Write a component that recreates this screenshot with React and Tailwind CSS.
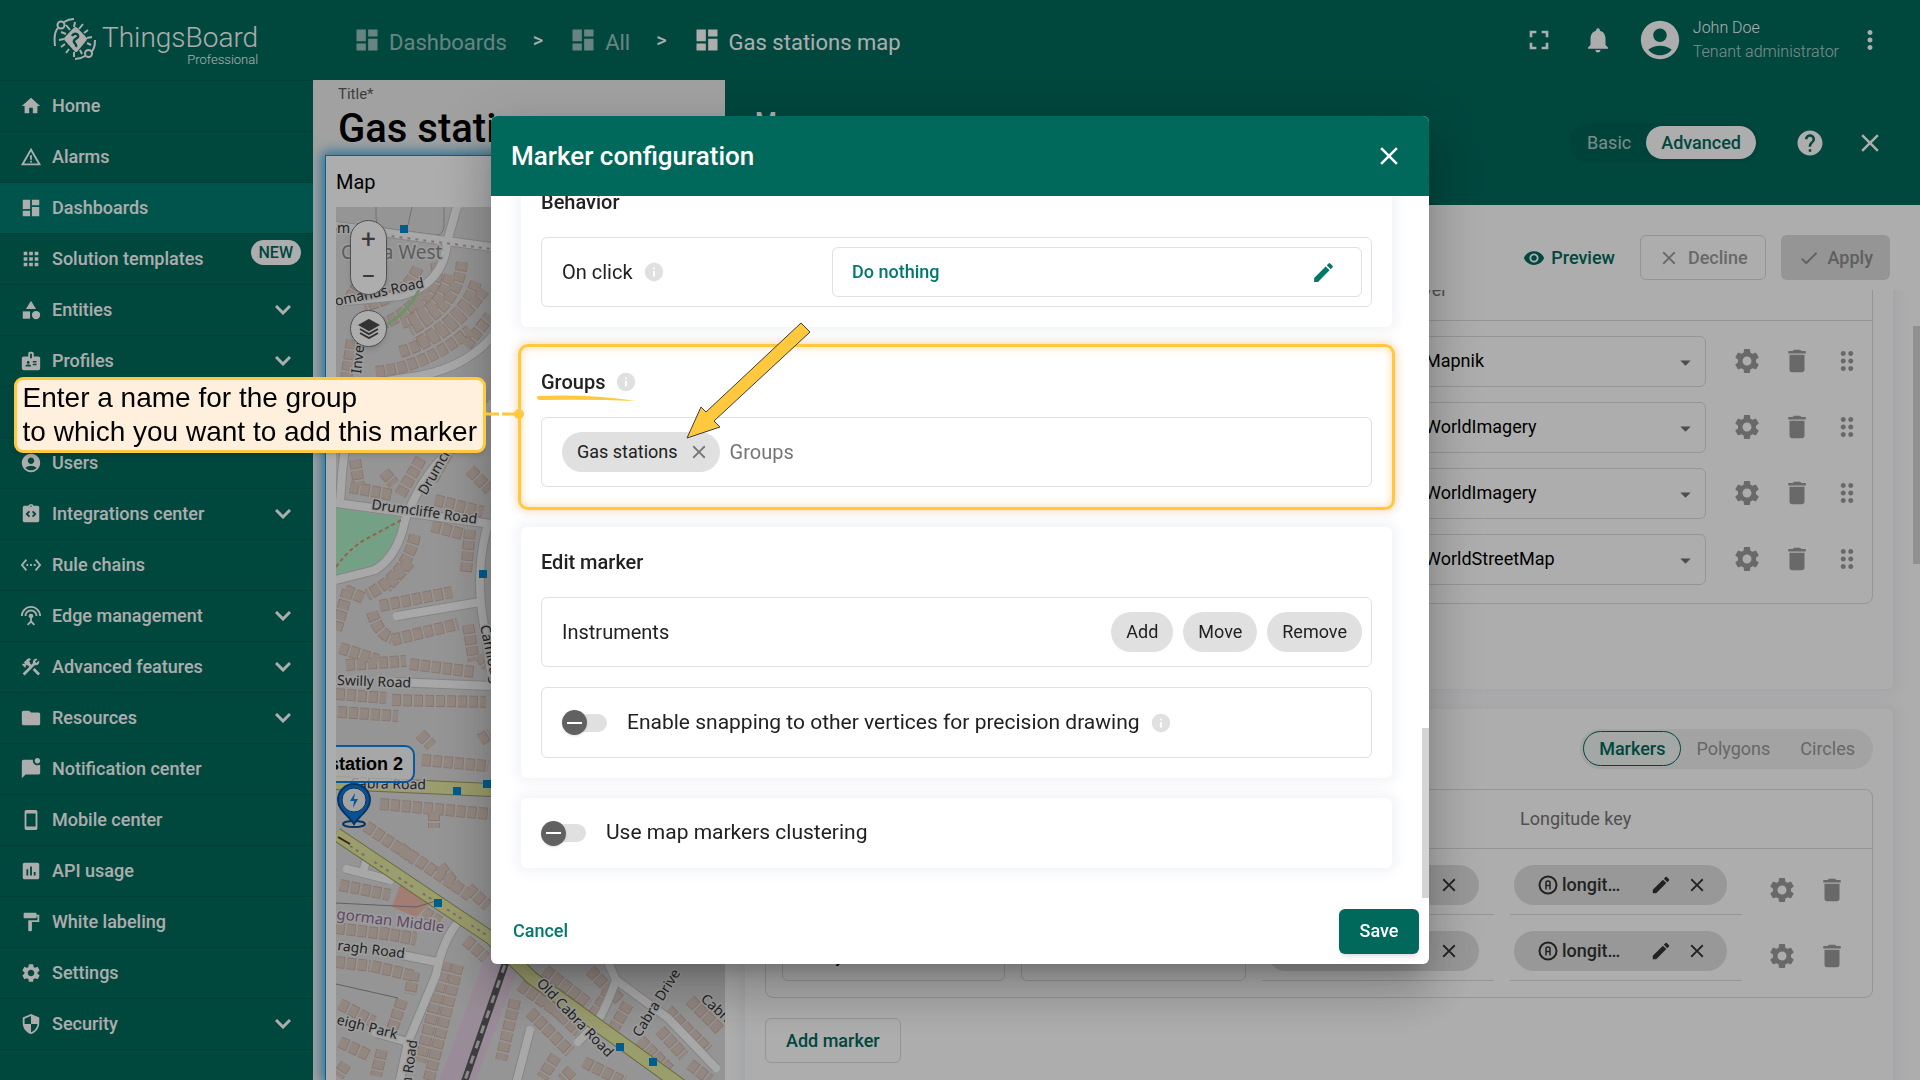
import {
  MdAccountCircle,
  MdApps,
  MdArrowDropDown,
  MdBadge,
  MdCategory,
  MdCheck,
  MdClose,
  MdConstruction,
  MdDashboard,
  MdDelete,
  MdDragIndicator,
  MdEdit,
  MdFolder,
  MdFormatPaint,
  MdFullscreen,
  MdHelp,
  MdHome,
  MdInfo,
  MdInsertChart,
  MdIntegrationInstructions,
  MdMarkChatUnread,
  MdMoreVert,
  MdNotifications,
  MdSecurity,
  MdSettings,
  MdSettingsEthernet,
  MdSettingsInputAntenna,
  MdStayPrimaryPortrait,
  MdSupervisorAccount,
  MdVisibility,
  MdWarningAmber,
} from "react-icons/md";

const menu = [
  { label: "Home", icon: MdHome },
  { label: "Alarms", icon: MdWarningAmber },
  { label: "Dashboards", icon: MdDashboard, active: true },
  { label: "Solution templates", icon: MdApps, badge: "NEW" },
  { label: "Entities", icon: MdCategory, expandable: true },
  { label: "Profiles", icon: MdBadge, expandable: true },
  { label: "Customers", icon: MdSupervisorAccount },
  { label: "Users", icon: MdAccountCircle },
  { label: "Integrations center", icon: MdIntegrationInstructions, expandable: true },
  { label: "Rule chains", icon: MdSettingsEthernet },
  { label: "Edge management", icon: MdSettingsInputAntenna, expandable: true },
  { label: "Advanced features", icon: MdConstruction, expandable: true },
  { label: "Resources", icon: MdFolder, expandable: true },
  { label: "Notification center", icon: MdMarkChatUnread },
  { label: "Mobile center", icon: MdStayPrimaryPortrait },
  { label: "API usage", icon: MdInsertChart },
  { label: "White labeling", icon: MdFormatPaint },
  { label: "Settings", icon: MdSettings },
  { label: "Security", icon: MdSecurity, expandable: true },
];

function Logo() {
  return (
    <div className="flex w-[313px] shrink-0 items-start pl-[53px] pt-4">
      <svg width="46" height="46" viewBox="0 0 46 46" fill="none" stroke="white" strokeWidth="2">
        <path d="M2 30C1 22 2 15 5 12M11 6C14 4 17 3 21 3" />
        <circle cx="8" cy="9" r="3.5" />
        <path d="M42 24c0 6-1 10-4 12M32 40c-3 2-6 3-10 3" />
        <circle cx="35.500" cy="37.500" r="3.500" />
        <path d="M22.500 13l9.500 10-9 11-10-11z" fill="white" strokeLinejoin="round" strokeWidth="4" />
        <path d="M17 14l-4-5M21 11l1-5M26 13l4-5M31 17l4-3M34 22l5-1M34 27l4 2M13 18l-5-2M11 23l-5 1M12 28l-4 3M16 33l-3 4M21 36v5M27 34l2 4" />
        <path d="M19 20c2-4 7-2 6 1-1 2-5 2-4 5 1 2 3 2 2 5" stroke="#00695c" strokeWidth="2.500" />
      </svg>
      <div className="ml-[3px] flex flex-col items-end text-white">
        <span className="text-[28px] leading-[44px] font-light">ThingsBoard</span>
        <span className="-mt-2 text-[13px] leading-4 font-light">Professional</span>
      </div>
    </div>
  );
}

function Header() {
  return (
    <header className="flex h-20 shrink-0 bg-[#00695c] text-white">
      <Logo />
      <nav className="flex flex-1 items-center pl-10 text-[22px]">
        <a href="#dashboards" className="flex items-center gap-2 opacity-60">
          <MdDashboard size={28} />
          <span className="pt-[5px]">Dashboards</span>
        </a>
        <span className="mx-[26px] text-xl font-medium">&gt;</span>
        <a href="#all" className="flex items-center gap-2 opacity-60">
          <MdDashboard size={28} />
          <span className="pt-[5px]">All</span>
        </a>
        <span className="mx-[26px] text-xl font-medium">&gt;</span>
        <a href="#map" className="flex items-center gap-2">
          <MdDashboard size={28} />
          <span className="pt-[5px]">Gas stations map</span>
        </a>
      </nav>
      <div className="flex items-center pr-[35px]">
        <button aria-label="Fullscreen" className="mr-7">
          <MdFullscreen size={32} />
        </button>
        <button aria-label="Notifications" className="mr-6">
          <MdNotifications size={30} />
        </button>
        <MdAccountCircle size={46} />
        <div className="mr-4 ml-[10px] pb-px text-base leading-6 font-light">
          <p>John Doe</p>
          <p className="opacity-70">Tenant administrator</p>
        </div>
        <button aria-label="More">
          <MdMoreVert size={30} />
        </button>
      </div>
    </header>
  );
}

function Sidebar() {
  return (
    <nav className="w-[313px] shrink-0 bg-[#00695c] text-white">
      {menu.map(({ label, icon: Icon, active, badge, expandable }) => (
        <a
          key={label}
          href={"#" + label}
          className={`flex h-[51px] items-center border-t border-[#005c51] pl-5 text-lg font-medium ${active ? "bg-[#007c70]" : ""}`}
        >
          <Icon size={22} />
          <span className="ml-[10px] flex-1">{label}</span>
          {badge && (
            <span className="mr-3 mb-[14px] rounded-full bg-white px-2 text-base leading-[25px] text-[#00695c]">{badge}</span>
          )}
          {expandable && (
            <svg className="mr-[22px]" width="16" height="10" viewBox="0 0 16 10" fill="none" stroke="white" strokeWidth="3">
              <path d="M1 1l7 7 7-7" />
            </svg>
          )}
        </a>
      ))}
      <div className="border-t border-[#005c51]" />
    </nav>
  );
}

const buildings = [
  "M385 262q-22 12-35 36M426 285q-18 36-62 44M418 268q-12 28-54 38",
  "M436 262q6 24-22 46M462 262q-4 44-52 68",
  "M450 275q-10 36-48 48M352 340l-6 40M476 282q-10 34-60 62",
  "M376 372q50-5 94-42M400 352q50-14 84-62M466 346l24-30",
  "M355 460l4 26M350 487l42 8M400 495l22-38M432 480l24-42M384 472l10 12",
  "M435 500l48 12M470 470l20 20M432 526l30 8M470 530l-4 42",
  "M415 535q-8 40-48 60M345 590l18 8M336 630l12-40",
  "M380 606l72-14M372 612q6 22 20 26M392 640l66-16M410 562l-24 26M468 625l6 36",
  "M346 665l60-4M340 648l38 12M410 664l64 8M480 655l8 12",
  "M336 694l50 4M392 700l94 2M338 712l60 4M420 734l12 12M480 740l10-6",
  "M422 760l66 6M380 804l110 10M434 812v16",
  "M366 826l50 34M400 848l70 48M468 888l20 18M440 866l16 20",
  "M340 885l50 10M336 928l80 10M380 932l36 8M424 912l16 10",
  "M336 962l34 4M372 966l42 10M466 940l20 18M414 972l-4 22",
  "M402 1000l-10 30M446 962l-26 100M458 965l-30 118M340 1004l34 18",
  "M340 1042l30 14M382 1050l-6 26M346 1064l-8 12",
  "M530 976l42 30M520 985l42 30M545 970l44 34M590 970l30 30M610 990l-20 30",
  "M515 1000l-14 60M530 1012l40 40M545 1000l34 32M556 1056l-14 22",
  "M668 1010l40 40M660 1030l24 26M690 1000l30 30M640 1040l30 30M584 1062l40 20",
  "M690 1064l20 16M628 1004l-14 24M572 1070l-10 10",
];

const roads = [
  "M336 226L491 247",
  "M457 207L447 242Q444 284 400 296L336 302",
  "M491 338Q460 372 405 378L356 386Q343 440 340 503",
  "M336 503L491 524",
  "M405 520Q420 480 445 455L491 404",
  "M405 520Q398 556 375 570L336 580",
  "M488 524Q476 566 482 612L491 672",
  "M397 616L480 602",
  "M395 682L491 686",
  "M347 869L390 880M367 858l-4 14",
  "M458 922Q442 942 436 975L408 1042",
  "M392 953L437 962",
  "M376 1033L408 1042L400 1080",
  "M607 960L616 980L668 1018L716 1068",
  "M616 980Q606 1008 596 1024L578 1042",
  "M530 1030L516 1084",
];

const stops = [
  [404, 229],
  [483, 574],
  [457, 791],
  [487, 784],
  [438, 903],
  [620, 1047],
  [653, 1062],
];

const mapLabels = [
  ["m Av", 337, 233, 0],
  ["omanus Road", 336, 306, -12],
  ["Inver", 361, 374, -84],
  ["Drumcliffe Road", 371, 509, 8],
  ["Drumcliffe", 426, 496, -60],
  ["Swilly Road", 337, 685, 2],
  ["Camlough", 480, 626, 78],
  ["Cabra Road", 350, 788, 1],
  ["ragh Road", 337, 950, 7],
  ["eigh Park", 336, 1024, 14],
  ["n Road", 411, 1086, -82],
  ["Old Cabra Road", 536, 984, 46],
  ["Cabra Drive", 640, 1038, -58],
  ["Cabra Drive", 700, 1000, 42],
];

function StreetMap() {
  return (
    <svg className="block h-full w-full bg-[#dddcdc]" aria-label="Street map">
      <g transform="translate(-336 -207)" fill="none">
        <path d="M336 508l68 10q-8 36-34 52l-34 8z" fill="#abeec4" />
        <path d="M400 885l-8 22 24 10 16-16z" fill="#efb9aa" />
        <path d="M495 930l-56 152h36l50-130z" fill="#e2cfe0" />
        <g stroke="#cbb0a4" strokeWidth="12" strokeDasharray="9 2">
          {buildings.map((d) => (
            <path key={d} d={d} />
          ))}
        </g>
        <g stroke="#d9c8be" strokeWidth="10" strokeDasharray="8 3">
          {buildings.map((d) => (
            <path key={d} d={d} />
          ))}
        </g>
        <path d="M376 207v10q0 10 8 11l52 7q8 0 8-10v-18M412 207l-4 18" stroke="#a9a9a9" />
        <g stroke="#c4c4c4" strokeWidth="10">
          {roads.map((d) => (
            <path key={d} d={d} />
          ))}
        </g>
        <g stroke="#f8f8f8" strokeWidth="8" strokeLinecap="round">
          {roads.map((d) => (
            <path key={d} d={d} />
          ))}
        </g>
        <path d="M336 229l155 20" stroke="#c3a7ae" strokeWidth="2" strokeDasharray="3 5" />
        <path d="M336 567q16-22 34-30l33-18" stroke="#e08d6d" strokeWidth="2" strokeDasharray="4 3" />
        <path d="M381 328q26-14 38-38" stroke="#a6d79a" strokeWidth="3" />
        <g strokeWidth="14" stroke="#9c9d5b">
          <path d="M336 783l155 7" />
          <path d="M336 834L491 938L532 978L690 1092" />
        </g>
        <g strokeWidth="12" stroke="#e4e7a0">
          <path d="M336 783l155 7" />
          <path d="M336 834L491 938L532 978L690 1092" />
        </g>
        <path d="M350 846L491 938" stroke="#b6a09f" strokeWidth="2" strokeDasharray="3 4 3 4 3 12" />
        <path d="M338 837l12 7" stroke="#513020" strokeWidth="2" />
        <path d="M510 950L463 1086" stroke="#5a5a5a" strokeWidth="7" />
        <path d="M510 950L463 1086" stroke="#cccccc" strokeWidth="3" strokeDasharray="8 8" />
        <path d="M336 903l80 4 20-6M336 984l62 14" stroke="#8e8e8e" />
        <g
          fill="#333333"
          stroke="#e8e8e8"
          strokeWidth="3"
          paintOrder="stroke"
          fontFamily="Noto Sans, sans-serif"
          fontSize="14"
        >
          <text x="341" y="259" fontSize="19" fill="#8a8a8a">
            Cabra West
          </text>
          <text x="336" y="919" fill="#8d6a96" fontSize="15" transform="rotate(7 336 919)">
            gorman Middle
          </text>
          {mapLabels.map(([text, x, y, angle]) => (
            <text key={text + x} x={x} y={y} transform={`rotate(${angle} ${x} ${y})`}>
              {text}
            </text>
          ))}
        </g>
        {stops.map(([x, y]) => (
          <rect key={x} x={x - 4} y={y - 4} width="8" height="8" fill="#0089d0" />
        ))}
        <rect x="290" y="746" width="124" height="36" rx="9" fill="#ffffff" fillOpacity="0.75" stroke="#0c82ee" strokeWidth="2" />
        <text x="403" y="770" textAnchor="end" fill="#000000" fontFamily="Liberation Sans, sans-serif" fontWeight="700" fontSize="18">
          Gas station 2
        </text>
        <ellipse cx="354" cy="824" rx="11" ry="3" stroke="#0a4f91" strokeWidth="2" />
        <path d="M354 824c-5-8-16-14-16-24a16 16 0 0 1 32 0c0 10-11 16-16 24z" fill="#0c78dd" stroke="#0a4f91" strokeWidth="2" />
        <circle cx="354" cy="800" r="12" fill="#f0f0f0" stroke="#0a4f91" />
        <path d="M355 793l-5 8h4l-1 7 5-9h-4z" fill="#0c82ee" />
      </g>
    </svg>
  );
}

function Dashboard() {
  return (
    <section className="flex min-w-0 flex-1 flex-col overflow-hidden bg-[#eeeeee]">
      <div className="h-[75px] pl-[25px] whitespace-nowrap">
        <p className="pt-1 text-[15px] leading-5 text-[#5c5c5c]">Title*</p>
        <h1 className="text-[40px] leading-[50px] font-medium text-black">Gas stations map</h1>
      </div>
      <div className="-mr-3 ml-3 flex flex-1 flex-col border border-b-0 border-[#0092dc] bg-white px-[10px] shadow-[0_0_12px_3px_#3aa3d8]">
        <h2 className="h-[51px] text-xl leading-[52px] text-black">Map</h2>
        <div className="relative min-h-0 flex-1">
          <div className="absolute inset-0">
            <StreetMap />
          </div>
          <div className="absolute top-[13px] left-[14px] flex w-[37px] flex-col items-center gap-[15px]">
            <div className="flex h-[75px] w-full flex-col items-center justify-between rounded-full border border-[#777777] bg-white text-[26px] leading-9 text-[#555555] shadow-md">
              <button aria-label="Zoom in">+</button>
              <button aria-label="Zoom out">−</button>
            </div>
            <button aria-label="Layers" className="flex h-[37px] w-full items-center justify-center rounded-full border border-[#777777] bg-white shadow-md">
              <svg width="22" height="20" viewBox="0 0 22 20" fill="none" stroke="#4b4b4b" strokeWidth="2">
                <path d="M11 1l9 5-9 5-9-5z" fill="#4b4b4b" />
                <path d="M2 10l9 5 9-5M2 14l9 5 9-5" />
              </svg>
            </button>
          </div>
        </div>
      </div>
    </section>
  );
}

function IconButton({ label, icon: Icon, size = 30 }) {
  return (
    <button aria-label={label} className="flex w-[50px] shrink-0 items-center justify-center text-[#9b9b9b]">
      <Icon size={size} />
    </button>
  );
}

function LayerRow({ value }) {
  return (
    <tr className="h-[66px]">
      <td />
      <td />
      <td className="px-2 pt-[15px] align-top">
        <div className="relative">
          <select
            aria-label="Layer"
            className="block h-[51px] w-full appearance-none rounded-md border border-[#dcdcdc] bg-transparent pl-8 text-lg text-black"
          >
            <option>{value}</option>
          </select>
          <MdArrowDropDown className="pointer-events-none absolute top-[14px] right-2 text-[#707070]" size={25} />
        </div>
      </td>
      <td className="pt-[15px] pl-2">
        <div className="flex">
          <IconButton label="Layer settings" icon={MdSettings} />
          <IconButton label="Delete layer" icon={MdDelete} />
          <IconButton label="Drag layer" icon={MdDragIndicator} />
        </div>
      </td>
    </tr>
  );
}

function KeyChip({ name }) {
  return (
    <div className="h-[50px] border-b border-[#dcdcdc]">
      <div className="mr-[15px] ml-1 flex h-10 items-center rounded-full bg-[#e0e0e0] pr-[19px] pl-6 text-lg font-medium text-[#333333]">
        <svg width="20" height="20" viewBox="0 0 20 20" fill="none" stroke="currentColor" strokeWidth="2">
          <circle cx="10" cy="10" r="8.500" />
          <path d="M8 14.500V7.500q0-1.500 2-1.500t2 1.500v7M8 10.500h4" strokeWidth="1.500" />
        </svg>
        <span className="ml-1 flex-1">{name}</span>
        <button aria-label="Edit key" className="mr-[14px]">
          <MdEdit size={22} />
        </button>
        <button aria-label="Remove key">
          <MdClose size={22} />
        </button>
      </div>
    </div>
  );
}

function MarkerRow() {
  return (
    <tr className="h-[66px]">
      <td className="pt-4 pr-2 pl-4">
        <select aria-label="Source" className="block h-[50px] w-full appearance-none rounded-md border border-[#dcdcdc] px-4 text-lg text-black">
          <option>Entity</option>
        </select>
      </td>
      <td className="px-2 pt-4">
        <input aria-label="Entity alias" className="block h-[50px] w-full rounded-md border border-[#dcdcdc] px-4 text-lg text-black" defaultValue="Gas station" />
      </td>
      <td className="px-2 pt-4">
        <KeyChip name="latitu…" />
      </td>
      <td className="px-2 pt-4">
        <KeyChip name="longit…" />
      </td>
      <td className="pt-4 pl-[7px]">
        <div className="flex">
          <IconButton label="Marker settings" icon={MdSettings} />
          <IconButton label="Delete marker" icon={MdDelete} />
        </div>
      </td>
    </tr>
  );
}

function Card({ children, className = "" }) {
  return <section className={`relative rounded-md bg-white p-5 shadow-[0_0_12px_6px_#f4f5f8] ${className}`}>{children}</section>;
}

function WidgetPanel() {
  return (
    <aside className="relative z-10 flex min-w-0 shrink-0 basis-[1195px] flex-col overflow-hidden bg-white">
      <div className="flex h-[125px] shrink-0 items-center justify-between bg-[#00695c] pr-[35px] pl-[30px] text-white">
        <div className="flex flex-col gap-4">
          <h2 className="text-[25px] leading-8 font-medium">Map</h2>
          <p className="text-base leading-6 opacity-70">Maps</p>
        </div>
        <div className="flex items-center">
          <div className="flex h-10 items-center rounded-full bg-black/5 p-[3px] text-lg">
            <button className="px-[15px] opacity-70">Basic</button>
            <button className="h-[33px] rounded-full bg-white px-[15px] font-medium text-[#00695c]">Advanced</button>
          </div>
          <button aria-label="Help" className="ml-9">
            <MdHelp size={30} />
          </button>
          <button aria-label="Close panel" className="ml-[30px]">
            <MdClose size={30} />
          </button>
        </div>
      </div>
      <div className="flex h-[85px] shrink-0 items-end justify-end pr-[30px] pb-[10px] text-lg font-medium">
        <button className="mr-[25px] flex h-[45px] items-center gap-[6px] text-[#00695c]">
          <MdVisibility size={22} />
          Preview
        </button>
        <button className="mr-[15px] flex h-[45px] items-center gap-2 rounded-md border border-[#d9d9d9] px-[17px] text-[#9b9b9b]">
          <MdClose size={22} />
          Decline
        </button>
        <button className="flex h-[45px] items-center gap-2 rounded-md bg-[#dcdcdc] px-[17px] text-[#8c8c8c]">
          <MdCheck size={22} />
          Apply
        </button>
      </div>
      <div className="relative min-h-0 flex-1 overflow-hidden">
        <div className="-mt-[90px] mr-[27px] ml-5 flex flex-col gap-5">
          <Card>
            <h3 className="mb-[10px] h-[30px] text-xl font-medium">Layers</h3>
            <div className="rounded-lg border border-[#dcdcdc] pb-[18px]">
              <table className="w-full table-fixed">
                <colgroup>
                  <col className="w-[304px]" />
                  <col />
                  <col className="w-[330px]" />
                  <col className="w-[158px]" />
                </colgroup>
                <thead>
                  <tr className="h-[59px] border-b border-[#dcdcdc] text-left text-lg text-[#757575]">
                    <th className="pl-5 font-normal">Label</th>
                    <th className="pl-5 font-normal">Provider</th>
                    <th className="pl-5 font-normal">Layer</th>
                    <th />
                  </tr>
                </thead>
                <tbody>
                  <LayerRow value="Mapnik" />
                  <LayerRow value="WorldImagery" />
                  <LayerRow value="WorldImagery" />
                  <LayerRow value="WorldStreetMap" />
                </tbody>
              </table>
            </div>
            <button className="mt-5 block h-[45px] rounded-md border border-[#dcdcdc] px-5 text-lg font-medium text-[#00695c]">
              Add layer
            </button>
          </Card>
          <Card className="min-h-[440px]">
            <div className="flex items-center justify-between">
              <h3 className="text-xl font-medium">Overlays</h3>
              <div className="flex h-10 items-center rounded-full bg-[#f0f0f0] p-[3px] text-lg text-[#999999]">
                <button className="h-[35px] rounded-full border border-[#00695c] bg-[#f0f6f5] px-[15px] font-medium text-[#00695c]">
                  Markers
                </button>
                <button className="px-[15px]">Polygons</button>
                <button className="px-[15px]">Circles</button>
              </div>
            </div>
            <div className="mt-5 rounded-lg border border-[#dcdcdc] pb-4">
              <table className="w-full table-fixed">
                <colgroup>
                  <col />
                  <col className="w-[241px]" />
                  <col className="w-[248px]" />
                  <col className="w-[248px]" />
                  <col className="w-[122px]" />
                </colgroup>
                <thead>
                  <tr className="h-[59px] border-b border-[#dcdcdc] text-left text-lg text-[#757575]">
                    <th className="pl-5 font-normal">Source</th>
                    <th className="pl-5 font-normal">Entity alias</th>
                    <th className="pl-5 font-normal">Latitude key</th>
                    <th className="pl-[18px] font-normal">Longitude key</th>
                    <th />
                  </tr>
                </thead>
                <tbody>
                  <MarkerRow />
                  <MarkerRow />
                </tbody>
              </table>
            </div>
            <button className="mt-5 block h-[45px] rounded-md border border-[#dcdcdc] px-5 text-lg font-medium text-[#00695c]">
              Add marker
            </button>
          </Card>
        </div>
        <div className="absolute top-9 right-0 h-[238px] w-[7px] bg-[#d4d4d4]" />
      </div>
    </aside>
  );
}

function Row({ children, className = "h-[70px]" }) {
  return <div className={`flex items-center rounded-md border border-[#e0e0e0] pr-[9px] pl-5 ${className}`}>{children}</div>;
}

function Info() {
  return <MdInfo size={22} className="ml-[10px] text-[#e0e0e0]" />;
}

function Toggle({ id }) {
  return (
    <span className="relative mr-5 flex h-[25px] w-[45px] items-center">
      <input id={id} type="checkbox" role="switch" className="ml-1 h-[18px] w-[41px] appearance-none rounded-full bg-[#e0e0e0]" />
      <span className="pointer-events-none absolute left-0 flex size-[25px] items-center justify-center rounded-full bg-[#616161] shadow">
        <span className="h-[2px] w-[15px] bg-white" />
      </span>
    </span>
  );
}

function Callout() {
  return (
    <div className="absolute top-[261px] right-[calc(100%+5px)] rounded-[9px] border-3 border-[#ffc83d] bg-[#fff0de] px-[6px] py-px font-['Liberation_Sans',sans-serif] text-[28px] leading-[34px] whitespace-nowrap text-black shadow-md">
      Enter a name for the group
      <br />
      to which you want to add this marker
      <svg className="absolute top-7 left-full ml-[3px]" width="40" height="12">
        <path d="M0 6h13M16 6h18" stroke="#ffc83d" strokeWidth="3" />
        <circle cx="33" cy="6" r="5" fill="#ffc83d" />
      </svg>
    </div>
  );
}

function MarkerDialog() {
  return (
    <div
      role="dialog"
      aria-label="Marker configuration"
      className="relative w-full max-w-[938px] rounded-md bg-white text-[#212121] shadow-[0_14px_19px_-9px_rgba(0,0,0,0.2),0_30px_48px_4px_rgba(0,0,0,0.14),0_11px_58px_10px_rgba(0,0,0,0.12)]"
    >
      <div className="flex h-20 items-center justify-between rounded-t-md bg-[#00695c] pr-[25px] pl-5 text-white">
        <h2 className="text-[26px] font-medium">Marker configuration</h2>
        <button aria-label="Close">
          <MdClose size={30} />
        </button>
      </div>
      <div className="relative flex max-h-[65vh] flex-col justify-end overflow-hidden">
        <div className="flex shrink-0 flex-col gap-5 pt-5 pr-[37px] pb-[30px] pl-[30px] text-xl">
          <Card>
            <h3 className="mb-5 leading-[30px] font-medium">Behavior</h3>
            <Row>
              <span>On click</span>
              <Info />
              <button className="ml-auto flex h-[50px] w-[530px] items-center justify-between rounded-md border border-[#e0e0e0] pr-[25px] pl-[19px] text-lg font-medium text-[#00796b]">
                Do nothing
                <MdEdit size={25} />
              </button>
            </Row>
          </Card>
          <Card>
            <div className="pointer-events-none absolute -inset-[3px] rounded-[10px] border-3 border-[#ffc83d] shadow-[0_0_8px_rgba(255,180,80,0.5),inset_0_0_8px_rgba(255,180,80,0.5)]" />
            <h3 className="mb-5 flex items-center leading-[30px] font-medium">
              Groups
              <Info />
            </h3>
            <Row>
              <span className="flex h-10 items-center gap-[10px] rounded-full bg-[#e0e0e0] pr-[10px] pl-[15px] text-lg">
                Gas stations
                <button aria-label="Remove Gas stations" className="text-[#757575]">
                  <MdClose size={22} />
                </button>
              </span>
              <input aria-label="Groups" placeholder="Groups" className="ml-[10px] min-w-0 flex-1 outline-none placeholder:text-[#757575]" />
            </Row>
            <svg className="pointer-events-none absolute -top-7 left-3" width="280" height="130">
              <path d="M5 77q50-2 98 5q-46-2-97-1q-4-2-1-4z" fill="#ffc83d" />
              <path
                d="M154 119l14-31 5 5 95-89 9 9-96 89 6 6z"
                fill="#ffc83d"
                stroke="#3c3c3c"
                strokeLinejoin="round"
              />
            </svg>
          </Card>
          <Card>
            <h3 className="mb-5 leading-[30px] font-medium">Edit marker</h3>
            <Row className="mb-5 h-[70px]">
              <span className="flex-1">Instruments</span>
              <div className="flex gap-[10px] text-lg">
                <button className="h-10 rounded-full bg-[#e0e0e0] px-[15px]">Add</button>
                <button className="h-10 rounded-full bg-[#e0e0e0] px-[15px]">Move</button>
                <button className="h-10 rounded-full bg-[#e0e0e0] px-[15px]">Remove</button>
              </div>
            </Row>
            <Row className="h-[71px]">
              <Toggle id="snapping" />
              <label htmlFor="snapping" className="text-[21px]">
                Enable snapping to other vertices for precision drawing
              </label>
              <Info />
            </Row>
          </Card>
          <Card>
            <div className="flex h-[30px] items-center">
              <Toggle id="clustering" />
              <label htmlFor="clustering" className="text-[21px]">
                Use map markers clustering
              </label>
            </div>
          </Card>
        </div>
        <div className="absolute right-0 bottom-0 h-[170px] w-[7px] bg-[#d4d4d4]" />
      </div>
      <div className="flex h-[66px] items-center justify-between px-[10px] text-lg font-medium">
        <button className="h-[45px] px-3 text-[#00796b]">Cancel</button>
        <button className="h-[45px] w-20 rounded-md bg-[#00695c] text-white shadow-md">Save</button>
      </div>
      <Callout />
    </div>
  );
}

export default function App() {
  return (
    <div className="flex h-screen flex-col overflow-hidden font-[Roboto,sans-serif]">
      <Header />
      <div className="flex min-h-0 flex-1">
        <Sidebar />
        <Dashboard />
        <WidgetPanel />
      </div>
      <div className="fixed inset-0 z-20 flex items-center justify-center bg-black/32">
        <MarkerDialog />
      </div>
    </div>
  );
}
